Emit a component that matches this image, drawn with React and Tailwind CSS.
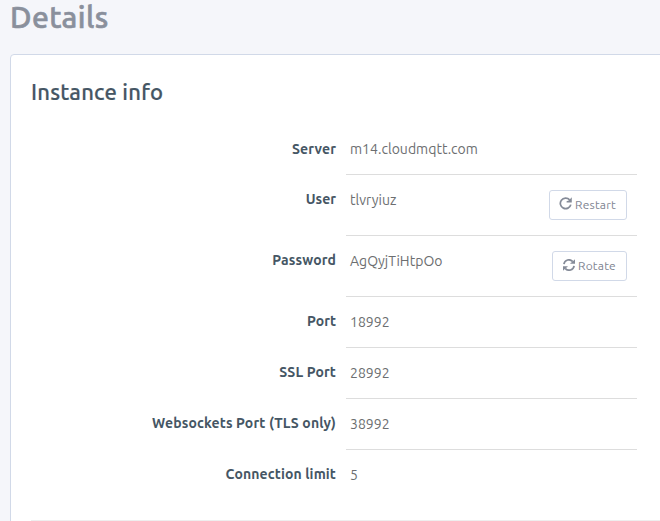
import React from "react";

function RestartIcon() {
  return (
    <svg width="13" height="13" viewBox="0 0 12 12" className="-mt-[3px] -ml-px shrink-0" fill="none" stroke="#858b98" strokeWidth="1.6">
      <path d="M9.8 2.6A4.9 4.9 0 1 0 10.9 7" />
      <path d="M11.8 0.2V5H7V4L9 3.2Z" fill="#858b98" stroke="none" />
    </svg>
  );
}

function RotateIcon() {
  return (
    <svg width="12" height="12" viewBox="0 0 12 12" className="-mt-[3px] shrink-0" fill="none" stroke="#858b98" strokeWidth="1.7">
      <path d="M0.9 5.2A5.1 5.1 0 0 1 9.8 2.6" />
      <path d="M11.1 6.8A5.1 5.1 0 0 1 2.2 9.4" />
      <path d="M12 0.2V4.8H7.4V4L9.2 3ZM0 11.8V7.2H4.6V8L2.8 9Z" fill="#858b98" stroke="none" />
    </svg>
  );
}

function ActionButton({ icon, label, className }) {
  return (
    <button className={`mt-[15px] mr-2.5 flex h-[30px] items-center gap-[3px] rounded-[3px] border border-[#d1d9e8] bg-white pl-2.5 text-[12px] leading-none tracking-[0.2px] whitespace-nowrap text-[#7f8592] ${className}`}>
      {icon}
      <span>{label}</span>
    </button>
  );
}

const rows = [
  { label: "Server", value: "m14.cloudmqtt.com", labelClass: "pt-[15px] tracking-[0.1px]" },
  {
    label: "User",
    value: "tlvryiuz",
    labelClass: "pt-[14px]",
    action: <ActionButton icon={<RestartIcon />} label="Restart" className="w-[78px]" />,
  },
  {
    label: "Password",
    value: "AgQyjTiHtpOo",
    labelClass: "pt-[14px] tracking-[0.12px]",
    action: <ActionButton icon={<RotateIcon />} label="Rotate" className="w-[75px]" />,
  },
  { label: "Port", value: "18992", labelClass: "pt-[14px]" },
  { label: "SSL Port", value: "28992", labelClass: "pt-[14px] tracking-[0.12px]" },
  { label: "Websockets Port (TLS only)", value: "38992", labelClass: "pt-[14px] tracking-[0.13px]" },
  { label: "Connection limit", value: "5", labelClass: "pt-[14px] tracking-[0.12px]", last: true },
];

function InfoRow({ label, value, labelClass, action, last }) {
  return (
    <div className={`flex ${action ? "h-[61px]" : "h-[51px]"}`}>
      <dt className={`w-[305px] shrink-0 text-right text-[14px] leading-5 font-bold whitespace-nowrap text-[#455664] ${labelClass}`}>
        {label}
      </dt>
      <dd className={`ml-2.5 flex w-[291px] justify-between pl-1 text-[14px] text-[#6c6e70] ${last ? "" : "border-b border-[#dddddd]"}`}>
        <span className="pt-[15px] leading-5 tracking-[0.03px]">{value}</span>
        {action}
      </dd>
    </div>
  );
}

export default function App() {
  return (
    <main className="h-[521px] w-[660px] overflow-hidden bg-[#f5f6fa] pl-2.5 font-['Ubuntu','Noto_Sans',sans-serif]">
      <h1 className="h-[54px] pt-[1px] text-[30px] leading-8 font-medium tracking-[0.4px] text-[#8a909c] [-webkit-text-stroke:0.6px_#8a909c]">Details</h1>
      <section className="h-[500px] w-[680px] rounded-[4px] border border-[#d1d9e8] bg-white pl-5">
        <h2 className="h-[69px] pt-[23px] text-[22px] leading-7 font-medium tracking-[0.2px] text-[#455664] [-webkit-text-stroke:0.2px_#455664]">Instance info</h2>
        <dl>
          {rows.map((row) => (
            <InfoRow key={row.label} {...row} />
          ))}
        </dl>
        <div className="mt-[19px] border-t border-[#eeeeee]" />
      </section>
    </main>
  );
}
